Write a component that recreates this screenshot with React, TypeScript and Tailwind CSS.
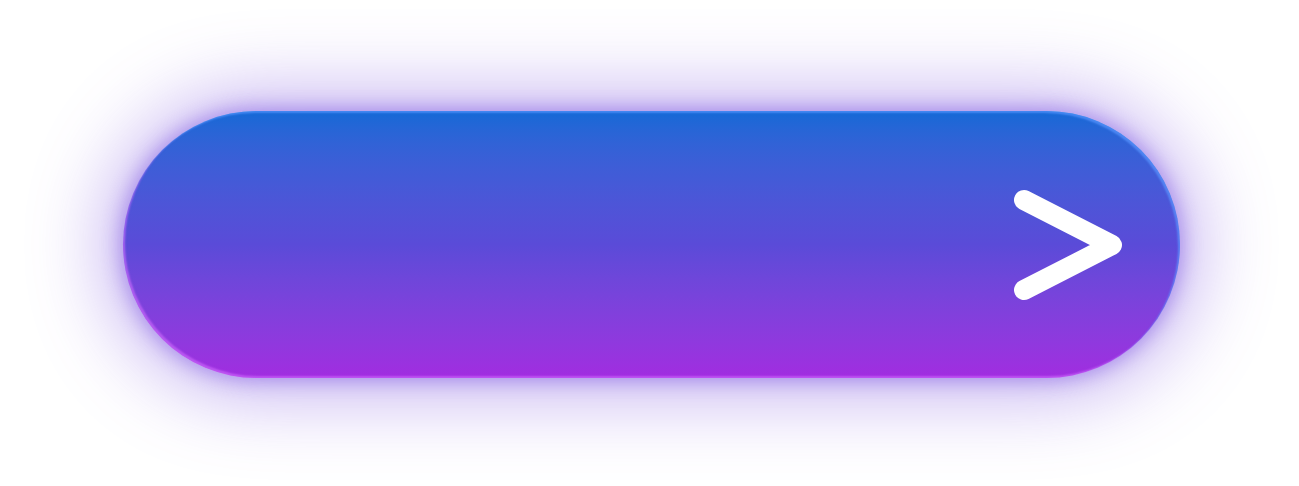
import React from 'react'

export default function App(){
  return (
    <div className="h-screen w-full flex items-center justify-center bg-white">
      <button
        className="w-[1057px] h-[267px] ml-[4px] mt-[3px] rounded-full bg-gradient-to-b from-[#1269d6] via-[#5a4bd8] to-[#a12ce0] flex items-center justify-end pr-[54px] shadow-[0_0_18px_4px_rgba(120,80,225,0.45),0_0_75px_20px_rgba(125,80,225,0.42),inset_-2px_2px_2px_rgba(90,150,255,0.7),inset_2px_-2px_2px_rgba(210,110,255,0.6)]"
      >
        <svg width="116" height="118" viewBox="0 0 116 118" fill="none">
          <path d="M14 14 L102 59 L14 104" stroke="white" strokeWidth="20" strokeLinecap="round" strokeLinejoin="round" />
        </svg>
      </button>
    </div>
  )
}
